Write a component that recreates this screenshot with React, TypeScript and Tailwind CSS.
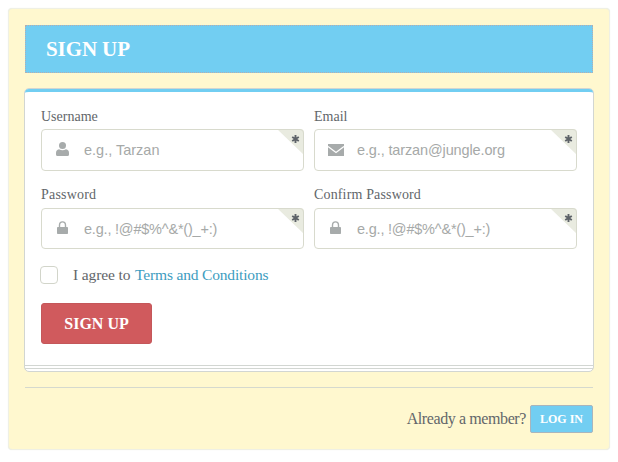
import React from "react";

function UserIcon() {
  return (
    <svg width="13" height="14" viewBox="0 0 13 14" fill="#a7abab" className="relative -left-px -top-px">
      <circle cx="6.5" cy="3.5" r="3.5" />
      <path d="M3 7.300C1 7.800 0 9 0 11v1.500Q0 14 1.500 14h10Q13 14 13 12.500V11c0-2-1-3.200-3-3.700Q6.500 9 3 7.300z" />
    </svg>
  );
}

function MailIcon() {
  return (
    <svg width="16" height="12" viewBox="0 0 16 12">
      <rect width="16" height="12" fill="#a7abab" />
      <path d="M0 2.500L8 8.500L16 2.500" fill="none" stroke="#fff" strokeWidth="1.300" />
    </svg>
  );
}

function LockIcon() {
  return (
    <svg width="11" height="14" viewBox="0 0 11 14" className="relative -left-px -top-px">
      <path d="M2.500 7V4.200a3 3.300 0 0 1 6 0V7" fill="none" stroke="#a7abab" strokeWidth="1.400" />
      <rect y="6" width="11" height="7" rx="0.800" fill="#a7abab" />
    </svg>
  );
}

function RequiredCorner() {
  return (
    <svg className="absolute -right-px -top-px" width="27" height="26" viewBox="0 0 27 26">
      <path d="M0 0H23Q27 0 27 4V26z" fill="#e9ebe0" />
      <path d="M0 .5H23Q26.500 .5 26.500 4V26" fill="none" stroke="#d8dacd" />
      <path d="M18.500 6V14M15.200 8L21.800 12M21.800 8L15.200 12" stroke="#5d6268" strokeWidth="1.900" />
    </svg>
  );
}

type FieldProps = {
  label: string;
  placeholder: string;
  type?: string;
  icon: React.ReactNode;
  boxClass: string;
  labelClass?: string;
  inputClass?: string;
};

function Field({ label, placeholder, type = "text", icon, boxClass, labelClass = "pt-px", inputClass = "" }: FieldProps) {
  return (
    <label className="flex flex-col">
      <span className={`h-[22px] whitespace-nowrap text-sm leading-[18px] ${labelClass}`}>{label}</span>
      <span className={`relative flex items-center rounded-[4px] border border-[#d8dacd] bg-white ${boxClass}`}>
        <span className="flex w-[42px] justify-center">{icon}</span>
        <input
          type={type}
          placeholder={placeholder}
          className={`w-[190px] bg-transparent pt-0.5 font-['Liberation_Sans',Arial,sans-serif] text-[14.5px] outline-none placeholder:text-[#a6a9a8] ${inputClass}`}
        />
        <RequiredCorner />
      </span>
    </label>
  );
}

export default function App() {
  return (
    <div className="h-[462px] w-[618px] bg-white pl-2 pt-2 font-['Liberation_Serif','Times_New_Roman',serif] text-[#62666a]">
      <main className="h-[442px] w-[602px] rounded-[4px] border border-[#eff0e4] bg-[#fff8cf] px-[15px] pt-4 shadow-[0_0_1px_#e5e9e1]">
        <h1 className="mx-px flex h-12 items-center border border-dotted border-[#b5adb0] bg-[#72cef2] pl-5 pt-px text-[21px] font-bold tracking-[-0.1px] text-white">
          SIGN UP
        </h1>
        <div className="mt-[15px] h-[284px] rounded-[5px] border border-[#d2d6d2] bg-white pb-[2px]">
          <div className="h-[277px] rounded-t-[4px] border-b border-t-[3px] border-b-[#d2d6d2] border-t-[#72cef2]">
            <form className="px-4 pt-[15px]">
              <div className="grid grid-cols-[263px_263px] gap-x-[10px] gap-y-[15px]">
                <Field label="Username" placeholder="e.g., Tarzan" icon={<UserIcon />} boxClass="h-[42px]" />
                <Field label="Email" placeholder="e.g., tarzan@jungle.org" icon={<MailIcon />} boxClass="h-[42px]" inputClass="tracking-[-0.13px]" />
                <Field label="Password" placeholder="e.g., !@#$%^&*()_+:)" type="password" icon={<LockIcon />} boxClass="h-[41px]" labelClass="pt-0 tracking-[0.2px]" inputClass="tracking-[-0.2px]" />
                <Field label="Confirm Password" placeholder="e.g., !@#$%^&*()_+:)" type="password" icon={<LockIcon />} boxClass="h-[41px]" labelClass="pt-0 tracking-[0.15px]" inputClass="tracking-[-0.2px]" />
              </div>
              <label className="-ml-px mt-[17px] flex h-[18px] items-center text-base">
                <input type="checkbox" className="h-[18px] w-[18px] appearance-none rounded-[4px] border border-[#d2d5ca] bg-white" />
                <span className="ml-[15px] whitespace-nowrap text-[15.5px] tracking-[-0.12px]">
                  I agree to <a className="ml-px tracking-[-0.17px] text-[#3d9cc0]">Terms and Conditions</a>
                </span>
              </label>
              <button type="button" className="mt-[19px] flex h-[41px] w-[111px] items-center justify-center rounded-[3px] border border-[#c4575a] bg-[#d05a5d] text-base font-bold text-white">
                SIGN UP
              </button>
            </form>
          </div>
          <div className="h-[3px] border-b border-[#d2d6d2]" />
        </div>
        <footer className="mx-px mt-[15px] flex justify-end border-t border-[#d5d9ce] pt-[17px]">
          <span className="mr-1 text-base leading-[27px] tracking-[-0.4px]">Already a member?</span>
          <button type="button" className="flex h-7 w-[63px] items-center justify-center rounded-[2px] border border-[#a9b5bd] bg-[#72cef2] text-xs font-bold text-white">
            LOG IN
          </button>
        </footer>
      </main>
    </div>
  );
}
